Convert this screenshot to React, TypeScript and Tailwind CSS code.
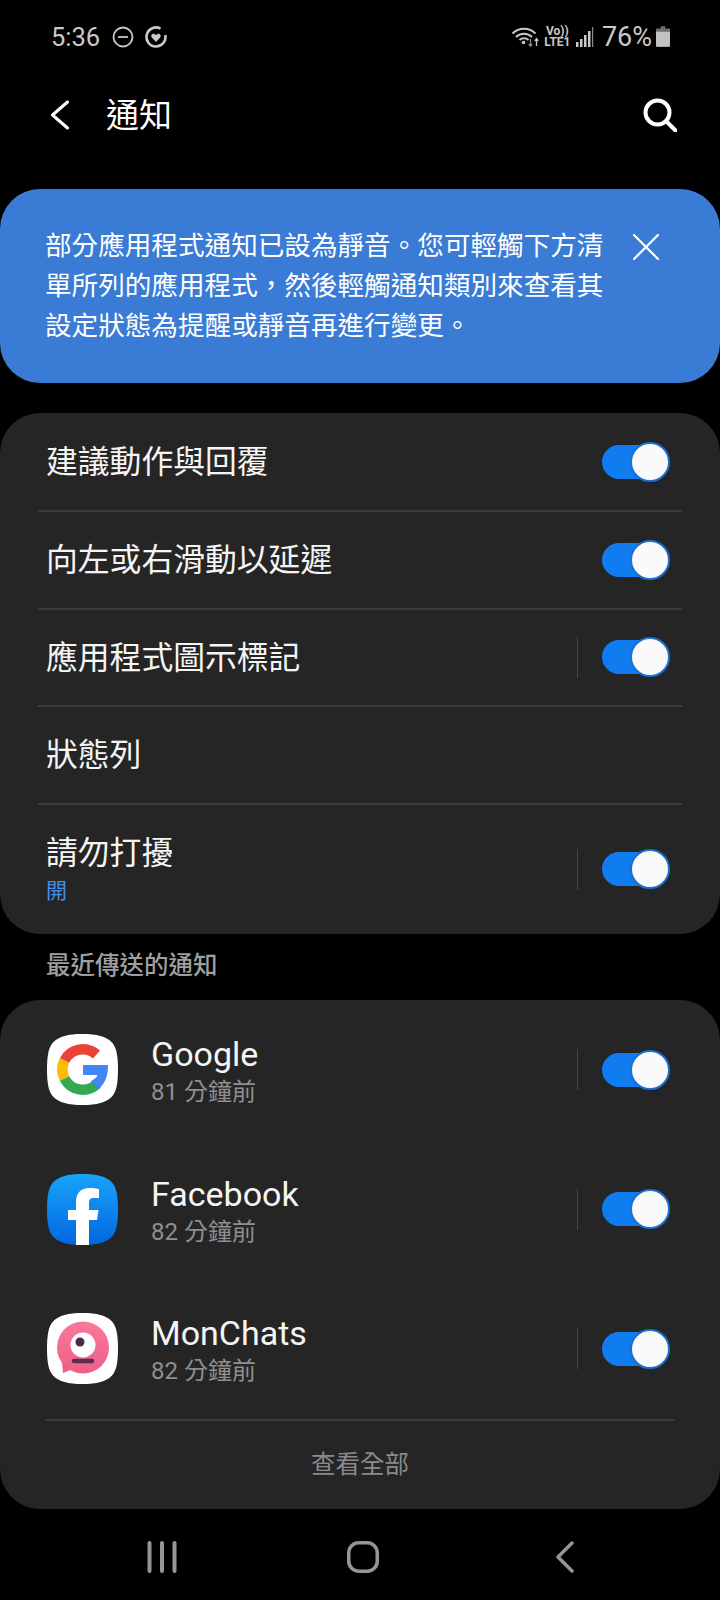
import type { ReactNode } from "react";

const SQUIRCLE = "M35.5 0C50 0 59 2.5 64.5 8C69.5 13 71 22 71 35.5C71 49 69.5 58 64.5 63C59 68.5 50 71 35.5 71C21 71 12 68.5 6.5 63C1.5 58 0 49 0 35.5C0 22 1.5 13 6.5 8C12 2.5 21 0 35.5 0Z";

function Toggle() {
  return (
    <div className="relative h-[34px] w-[67px] rounded-full bg-[#0f7cf0]">
      <div className="absolute -right-px -top-[3px] h-10 w-10 rounded-full border-2 border-[#1a6fd0] bg-[#fafafa]" />
    </div>
  );
}

function ToggleWithDivider() {
  return (
    <div className="flex items-center">
      <div className="mr-6 h-[41px] w-px bg-[#484848]" />
      <Toggle />
    </div>
  );
}

function Divider() {
  return <div className="mx-[38px] h-0.5 bg-[#3b3b3b]" />;
}

function GoogleIcon() {
  return (
    <svg width="71" height="71" viewBox="0 0 71 71" className="shrink-0">
      <path d={SQUIRCLE} fill="#ffffff" />
      <g fill="none" strokeWidth="10.5">
        <path d="M17.5 26.5A20.5 20.5 0 0 1 49.5 20.5" stroke="#ea4335" />
        <path d="M17.5 44.5A20.5 20.5 0 0 1 17.5 26.5" stroke="#fbbc05" />
        <path d="M17.5 44.5A20.5 20.5 0 0 0 50 50" stroke="#34a853" />
      </g>
      <path d="M36 31H61C61.3 41 58 50 51.5 55L44 47C47 45 49.5 44 50.5 41H36Z" fill="#4285f4" />
    </svg>
  );
}

function FacebookIcon() {
  return (
    <svg width="71" height="71" viewBox="0 0 71 71" className="shrink-0">
      <defs>
        <linearGradient id="fb" x1="0" y1="0" x2="0" y2="1">
          <stop offset="0" stopColor="#18a4fb" />
          <stop offset="1" stopColor="#0266e0" />
        </linearGradient>
      </defs>
      <path d={SQUIRCLE} fill="url(#fb)" />
      <path d="M29 71V46H21V36H29V28C29 19 34 14 42 14C46 14 50 14.5 52 15V24H46.5C43 24 42 26 42 29V36H51.5L50 46H42V71Z" fill="#ffffff" />
    </svg>
  );
}

function MonChatsIcon() {
  return (
    <svg width="71" height="71" viewBox="0 0 71 71" className="shrink-0">
      <defs>
        <linearGradient id="mc" x1="0" y1="0" x2="0" y2="1">
          <stop offset="0" stopColor="#f8799c" />
          <stop offset="1" stopColor="#ee5f88" />
        </linearGradient>
      </defs>
      <path d={SQUIRCLE} fill="#ffffff" />
      <circle cx="36" cy="34.5" r="26" fill="url(#mc)" />
      <path d="M15 49L16 60L26 56Z" fill="#ee5f88" />
      <circle cx="36" cy="32" r="12.5" fill="#ffffff" />
      <circle cx="33" cy="29" r="4.5" fill="#4b2c45" />
      <path d="M27 48H45" stroke="#5b2f4c" strokeWidth="4.5" strokeLinecap="round" />
    </svg>
  );
}

function StatusBar() {
  return (
    <div className="flex h-[73px] items-center justify-between pl-[51px] pr-[50px] text-[#c9c9c9]">
      <div className="flex items-center">
        <span className="mt-[2px] text-[25.5px] leading-none">5:36</span>
        <svg width="22" height="22" viewBox="0 0 22 22" className="ml-[12px]" fill="none" stroke="#c9c9c9" strokeWidth="1.8">
          <circle cx="11" cy="11" r="9.5" />
          <path d="M6 11H16" />
        </svg>
        <svg width="22" height="22" viewBox="0 0 22 22" className="ml-[11px]" fill="none">
          <path d="M15.5 2.6A9.5 9.5 0 1 0 20.3 9" stroke="#c9c9c9" strokeWidth="2.6" />
          <path d="M11 16L6.8 11.5C5.5 9.5 7 7.5 9 7.8L11 9L13 7.8C15 7.5 16.5 9.5 15.2 11.5Z" fill="#c9c9c9" />
        </svg>
      </div>
      <div className="flex items-center">
        <svg width="27" height="20" viewBox="0 0 27 20" fill="none" stroke="#c9c9c9" strokeWidth="2">
          <path d="M0.5 6.5C6.5 0 17.5 0 23.5 6.5" />
          <path d="M4 10C8.500 5.500 15.500 5.500 20 10" />
          <path d="M7.500 13C10 10.800 14 10.800 16.500 13" />
          <circle cx="11.500" cy="15.500" r="1.800" fill="#c9c9c9" stroke="none" />
          <path d="M18.500 12V19M16.800 17L18.500 19.300L20.200 17" strokeWidth="1.300" stroke="#8a8a8a" />
          <path d="M24.500 19V12M22.800 14L24.500 11.700L26.200 14" strokeWidth="1.300" />
        </svg>
        <div className="ml-[5px] flex w-[27px] flex-col items-center text-[12px] font-bold leading-[11px]">
          <span>Vo))</span>
          <span>LTE1</span>
        </div>
        <svg width="18" height="20" viewBox="0 0 18 20" className="ml-[5px]" fill="#c9c9c9">
          <rect x="0" y="15" width="2.5" height="5" />
          <rect x="4" y="12" width="2.5" height="8" />
          <rect x="8" y="8" width="2.5" height="12" />
          <rect x="12" y="4" width="2.5" height="16" />
          <rect x="16" y="0" width="1.2" height="20" fill="#8a8a8a" />
        </svg>
        <span className="ml-[8px] mt-[2px] text-[27px] leading-none">76%</span>
        <svg width="14" height="21" viewBox="0 0 15 22" className="ml-[4px]">
          <path d="M5 0H10V2.5H14C14.6 2.5 15 3 15 3.5V21C15 21.500 14.600 22 14 22H1C0.400 22 0 21.500 0 21V3.500C0 3 0.400 2.500 1 2.500H5Z" fill="#6e6e6e" />
          <path d="M0 6H15V21C15 21.500 14.600 22 14 22H1C0.400 22 0 21.500 0 21Z" fill="#c2c2c2" />
        </svg>
      </div>
    </div>
  );
}

function Header() {
  return (
    <div className="flex h-[84px] items-center justify-between pl-[50px] pr-[43px]">
      <div className="flex items-center">
        <svg width="20" height="30" viewBox="0 0 20 30" fill="none" stroke="#ffffff" strokeWidth="3" strokeLinecap="round" strokeLinejoin="round">
          <path d="M17.5 2L2.500 15L17.500 28" />
        </svg>
        <span className="ml-[36px] text-[33px] leading-none text-white">通知</span>
      </div>
      <svg width="34" height="34" viewBox="0 0 34 34" fill="none" stroke="#ffffff" strokeWidth="4">
        <circle cx="14.5" cy="14.5" r="12" />
        <path d="M23.5 23.5L32.5 32.5" strokeLinecap="round" />
      </svg>
    </div>
  );
}

function Banner() {
  return (
    <div className="flex h-[194px] items-center justify-between rounded-[40px] bg-[#3a7bd5] pl-[45px] pr-[60px] text-white">
      <div className="text-[26.6px] leading-[40px]">
        <div>部分應用程式通知已設為靜音。您可輕觸下方清</div>
        <div>單所列的應用程式，然後輕觸通知類別來查看其</div>
        <div>設定狀態為提醒或靜音再進行變更。</div>
      </div>
      <svg width="28" height="28" viewBox="0 0 28 28" className="mb-[78px]" fill="none" stroke="#ffffff" strokeWidth="2.2" strokeLinecap="round">
        <path d="M2 2L26 26M26 2L2 26" />
      </svg>
    </div>
  );
}

function SettingRow({ label, toggle, divider, first }: { label: string; toggle?: boolean; divider?: boolean; first?: boolean }) {
  return (
    <div className={first ? "flex h-[97px] items-center justify-between pl-[46px] pr-[51px]" : "flex h-[95.5px] items-center justify-between pl-[46px] pr-[51px]"}>
      <span className="pt-[3px] text-[31.8px] leading-none text-[#f5f5f5]">{label}</span>
      {toggle && (divider ? <ToggleWithDivider /> : <Toggle />)}
    </div>
  );
}

function SettingsCard() {
  return (
    <div className="mt-[30px] rounded-[40px] bg-[#252525]">
      <SettingRow label="建議動作與回覆" toggle first />
      <Divider />
      <SettingRow label="向左或右滑動以延遲" toggle />
      <Divider />
      <SettingRow label="應用程式圖示標記" toggle divider />
      <Divider />
      <SettingRow label="狀態列" />
      <Divider />
      <div className="flex h-[129.5px] items-center justify-between pl-[46px] pr-[51px]">
        <div className="flex flex-col">
          <span className="text-[31.8px] leading-[40px] text-[#f5f5f5]">請勿打擾</span>
          <span className="mt-[3px] text-[21px] leading-[30px] text-[#4a8fe8]">開</span>
        </div>
        <ToggleWithDivider />
      </div>
    </div>
  );
}

function AppRow({ name, time, icon }: { name: string; time: string; icon: ReactNode }) {
  return (
    <div className="flex h-[139.5px] items-center pl-[47px] pr-[51px]">
      {icon}
      <div className="ml-[33px] flex flex-1 flex-col pt-[2px]">
        <span className="text-[34px] leading-[40px] text-[#f5f5f5]">{name}</span>
        <span className="mt-[3px] text-[24px] leading-[30px] text-[#8f8f8f]">{time}</span>
      </div>
      <ToggleWithDivider />
    </div>
  );
}

function RecentCard() {
  return (
    <div className="rounded-[40px] bg-[#252525]">
      <AppRow name="Google" time="81 分鐘前" icon={<GoogleIcon />} />
      <AppRow name="Facebook" time="82 分鐘前" icon={<FacebookIcon />} />
      <AppRow name="MonChats" time="82 分鐘前" icon={<MonChatsIcon />} />
      <div className="mx-[45px] h-0.5 bg-[#3b3b3b]" />
      <div className="flex h-[88.5px] items-center justify-center pt-[2px] text-[24.5px] text-[#8a8a8a]">查看全部</div>
    </div>
  );
}

function NavBar() {
  return (
    <div className="flex h-[91px] items-center justify-between pl-[147px] pr-[146px] pt-[5px]">
      <svg width="30" height="32" viewBox="0 0 30 32" stroke="#959595" strokeWidth="4" strokeLinecap="round">
        <path d="M2.5 2V30M15 2V30M27.5 2V30" />
      </svg>
      <svg width="32" height="32" viewBox="0 0 32 32" fill="none" stroke="#959595" strokeWidth="3.5">
        <rect x="1.75" y="1.75" width="28.5" height="28.5" rx="10" />
      </svg>
      <svg width="25" height="32" viewBox="0 0 25 32" fill="none" stroke="#959595" strokeWidth="3.5" strokeLinecap="round" strokeLinejoin="round">
        <path d="M23 2L9 16L23 30" />
      </svg>
    </div>
  );
}

export default function App() {
  return (
    <div className="flex h-[1600px] w-[720px] flex-col overflow-hidden bg-black font-['Roboto','Noto_Sans_CJK_TC',sans-serif]">
      <StatusBar />
      <Header />
      <div className="h-[32px]" />
      <Banner />
      <SettingsCard />
      <div className="flex h-[66px] items-center pb-[1px] pl-[46px] text-[24.5px] font-medium text-[#9f9f9f]">最近傳送的通知</div>
      <RecentCard />
      <NavBar />
    </div>
  );
}
